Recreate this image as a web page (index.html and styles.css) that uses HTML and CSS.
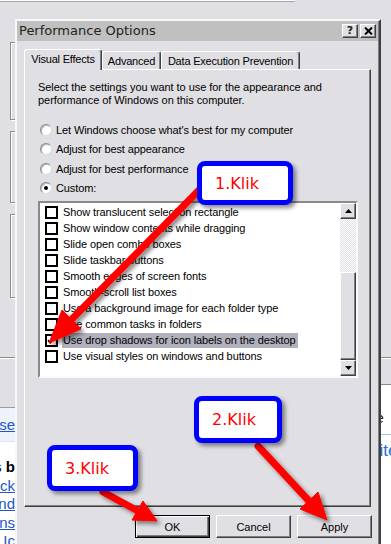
FILE: index.html
```html
<!DOCTYPE html>
<html>
<head>
<meta charset="utf-8">
<link rel="stylesheet" href="styles.css">
</head>
<body>
<div class="desk">
  <div class="bg-topline"></div>
  <div class="gbox g1"></div>
  <div class="gbox g2"></div>
  <div class="gbox g3"></div>
  <div class="bg-hline bg-hline-left"></div>
  <div class="web-left">
    <div class="wl-link-box"><a class="wl-link">Use</a></div>
    <div class="wl-line bold">Visual effects b</div>
    <div class="wl-line"><a class="wl-link">Click</a></div>
    <div class="wl-line"><a class="wl-link">and</a></div>
    <div class="wl-line"><a class="wl-link">Options</a></div>
    <div class="wl-line"><a class="wl-link">for Ic</a></div>
  </div>
  <div class="bg-hline bg-hline-right1"></div>
  <div class="bg-hline bg-hline-right2"></div>
  <div class="web-right">
    <div class="wr-line">the</div>
    <div class="wr-rule"></div>
    <div class="wr-line blue">site</div>
  </div>

  <div class="dialog">
    <div class="titlebar">
      <span class="title">Performance Options</span>
      <div class="capbtns">
        <div class="capbtn help">?</div>
        <div class="capbtn close">
          <svg width="9" height="8" viewBox="0 0 9 8"><path d="M1 0.5 L8 7.5 M8 0.5 L1 7.5" stroke="#000" stroke-width="2"/></svg>
        </div>
      </div>
    </div>
    <div class="client">
      <div class="tabs">
        <div class="tab sel tab-ve">Visual Effects</div>
        <div class="tab tab-adv">Advanced</div>
        <div class="tab tab-dep">Data Execution Prevention</div>
      </div>
      <div class="panel">
        <p class="intro">Select the settings you want to use for the appearance and<br>performance of Windows on this computer.</p>
        <div class="radios">
          <div class="radio-row"><span class="radio"></span><span>Let Windows choose what's best for my computer</span></div>
          <div class="radio-row"><span class="radio"></span><span>Adjust for best appearance</span></div>
          <div class="radio-row"><span class="radio"></span><span>Adjust for best performance</span></div>
          <div class="radio-row"><span class="radio on"></span><span>Custom:</span></div>
        </div>
        <div class="listbox">
          <ul class="items">
            <li class="item"><span class="cb"></span><span class="lbl">Show translucent selection rectangle</span></li>
            <li class="item"><span class="cb"></span><span class="lbl">Show window contents while dragging</span></li>
            <li class="item"><span class="cb"></span><span class="lbl">Slide open combo boxes</span></li>
            <li class="item"><span class="cb"></span><span class="lbl">Slide taskbar buttons</span></li>
            <li class="item"><span class="cb"></span><span class="lbl">Smooth edges of screen fonts</span></li>
            <li class="item"><span class="cb"></span><span class="lbl">Smooth-scroll list boxes</span></li>
            <li class="item"><span class="cb"></span><span class="lbl">Use a background image for each folder type</span></li>
            <li class="item"><span class="cb"></span><span class="lbl">Use common tasks in folders</span></li>
            <li class="item"><span class="cb"><svg width="9" height="9" viewBox="0 0 9 9"><path d="M1 4.2 L3.4 6.8 L8 1.2" stroke="#000" stroke-width="1.7" fill="none"/></svg></span><span class="lbl selected">Use drop shadows for icon labels on the desktop</span></li>
            <li class="item"><span class="cb"></span><span class="lbl">Use visual styles on windows and buttons</span></li>
          </ul>
          <div class="sb">
            <div class="sb-btn"><svg width="7" height="4" viewBox="0 0 7 4"><path d="M3.5 0 L7 4 L0 4Z"/></svg></div>
            <div class="sb-track"></div>
            <div class="sb-thumb"></div>
            <div class="sb-btn"><svg width="7" height="4" viewBox="0 0 7 4"><path d="M0 0 L7 0 L3.5 4Z"/></svg></div>
          </div>
        </div>
      </div>
      <div class="actions">
        <div class="btn default">OK</div>
        <div class="btn">Cancel</div>
        <div class="btn">Apply</div>
      </div>
    </div>
  </div>

  <svg class="arrows" width="391" height="544" viewBox="0 0 391 544">
    <defs>
      <filter id="sh" x="-20%" y="-20%" width="140%" height="140%">
        <feDropShadow dx="3" dy="3" stdDeviation="2" flood-color="#000" flood-opacity="0.45"/>
      </filter>
    </defs>
    <g filter="url(#sh)" fill="#ff0000" stroke="#ff0000">
      <line x1="203" y1="186" x2="71" y2="320" stroke-width="7" stroke-linecap="round"/>
      <polygon points="49,343 81,329 62,310" stroke-width="1" stroke-linejoin="round"/>
      <line x1="258" y1="446" x2="309" y2="501" stroke-width="7" stroke-linecap="round"/>
      <polygon points="327,520 318,492 300,509" stroke-width="1" stroke-linejoin="round"/>
      <line x1="103" y1="492" x2="138" y2="511" stroke-width="7" stroke-linecap="round"/>
      <polygon points="157,521 143,501 132,520" stroke-width="1" stroke-linejoin="round"/>
    </g>
  </svg>

  <div class="callout c1">1.Klik</div>
  <div class="callout c2">2.Klik</div>
  <div class="callout c3">3.Klik</div>
</div>
</body>
</html>
```
FILE: styles.css
```css
html, body {
  margin: 0;
  padding: 0;
}
body {
  width: 391px;
  height: 544px;
  overflow: hidden;
  background: #e0dfe3;
  font-family: "Liberation Sans", Arial, sans-serif;
  font-size: 11px;
  color: #000;
}
.desk {
  position: relative;
  width: 391px;
  height: 544px;
  overflow: hidden;
  background: #e0dfe3;
}

/* background windows */
.bg-topline {
  position: absolute;
  left: 0;
  top: 0;
  width: 295px;
  height: 1px;
  background: #fbfbfb;
  border-bottom: 1px solid #a8a8a8;
}
.gbox {
  position: absolute;
  left: 10px;
  width: 12px;
  border: 1px solid #8c8c8c;
  box-shadow: inset 1px 1px 0 #fff, 1px 1px 0 #fff;
}
.g1 { top: 42px; height: 76px; }
.g2 { top: 131px; height: 70px; }
.g3 { top: 214px; height: 82px; }
.bg-hline {
  position: absolute;
  height: 1px;
  background: #8c8c8c;
  box-shadow: 0 1px 0 #fff;
}
.bg-hline-left { left: 0; top: 357px; width: 15px; }
.bg-hline-right1 { left: 380px; top: 357px; width: 11px; }
.bg-hline-right2 { left: 380px; top: 384px; width: 11px; }
.web-left {
  position: absolute;
  left: 0;
  top: 407px;
  width: 15px;
  height: 137px;
  background: #fff;
  border-top: 1px solid #9a9a9a;
  overflow: hidden;
  font-family: "Liberation Sans", Arial, sans-serif;
  font-size: 15px;
}
.wl-link-box {
  height: 33px;
  background: #edf2fb;
  display: flex;
  align-items: center;
  justify-content: flex-end;
  white-space: nowrap;
  border-bottom: 1px solid #dbe4f3;
}
.wl-link {
  color: #2256c8;
  text-decoration: underline;
}
.wl-line {
  height: 18.5px;
  line-height: 18.5px;
  display: flex;
  justify-content: flex-end;
  white-space: nowrap;
}
.wl-line.bold {
  margin-top: 16px;
  font-weight: bold;
}
.web-right {
  position: absolute;
  left: 381px;
  top: 386px;
  width: 10px;
  height: 158px;
  background: #fff;
  overflow: hidden;
  font-family: "Liberation Sans", Arial, sans-serif;
  font-size: 15px;
}
.wr-line {
  padding-top: 24px;
  line-height: 16px;
  white-space: nowrap;
  margin-left: -18px;
  color: #222;
}
.wr-line.blue {
  color: #2a6fd0;
  padding-top: 8px;
  font-size: 17px;
  margin-left: -10px;
}
.wr-rule {
  margin-top: 8px;
  height: 1px;
  background: #9cc8e8;
}

/* dialog */
.dialog {
  position: absolute;
  left: 15px;
  top: 19px;
  width: 366px;
  height: 540px;
  box-sizing: border-box;
  background: #e0dfe3;
  border: 2px solid;
  border-color: #f8f8f8 #404040 #404040 #f8f8f8;
  box-shadow: inset -1px -1px 0 #808080;
}
.titlebar {
  height: 20px;
  background: #c0c0c0;
  display: flex;
  align-items: center;
  justify-content: space-between;
  padding: 0 2px 0 2px;
  margin-right: 1px;
  font-family: "DejaVu Sans", Verdana, sans-serif;
  font-size: 13px;
  color: #222;
}
.title {
  line-height: 20px;
}
.capbtns {
  display: flex;
  gap: 2px;
}
.capbtn {
  width: 16px;
  height: 14px;
  box-sizing: border-box;
  background: #e0dfe3;
  border: 1px solid;
  border-color: #fff #404040 #404040 #fff;
  box-shadow: inset -1px -1px 0 #808080;
  display: flex;
  align-items: center;
  justify-content: center;
}
.capbtn.help {
  font-family: "DejaVu Sans", Verdana, sans-serif;
  font-weight: bold;
  font-size: 11px;
  line-height: 12px;
}
.client {
  padding: 8px 8px 0 7px;
}
.tabs {
  display: flex;
  align-items: flex-end;
  height: 20px;
}
.tab {
  height: 18px;
  box-sizing: border-box;
  background: #e0dfe3;
  border: 1px solid;
  border-bottom: none;
  border-color: #fff #404040 transparent #fff;
  box-shadow: inset -1px 0 0 #808080;
  border-radius: 3px 3px 0 0;
  display: flex;
  align-items: center;
  justify-content: center;
  white-space: nowrap;
  letter-spacing: -0.2px;
}
.tab.sel {
  height: 21px;
  margin-bottom: -1px;
  position: relative;
  z-index: 1;
  padding-bottom: 3px;
}
.tab-ve { width: 78px; }
.tab-adv { width: 59px; }
.tab-dep { width: 139px; }
.panel {
  height: 438px;
  box-sizing: border-box;
  border: 1px solid;
  border-color: #fff #404040 #404040 #fff;
  box-shadow: inset -1px -1px 0 #808080;
  padding: 11px 13px 0 13px;
}
.intro {
  margin: 0;
  line-height: 13px;
  letter-spacing: -0.05px;
  white-space: nowrap;
}
.radios {
  margin-top: 13px;
}
.radio-row {
  height: 19.5px;
  display: flex;
  align-items: center;
  gap: 4px;
  padding-left: 2px;
  letter-spacing: -0.1px;
  white-space: nowrap;
}
.radio {
  position: relative;
  flex: none;
  width: 12px;
  height: 12px;
  box-sizing: border-box;
  border-radius: 50%;
  background: #fff;
  border: 1px solid;
  border-color: #8a8a8a #dcdcdc #dcdcdc #8a8a8a;
  box-shadow: inset 1px 1px 0 #b8b8b8;
}
.radio.on::after {
  content: "";
  position: absolute;
  left: 3px;
  top: 3px;
  width: 4px;
  height: 4px;
  border-radius: 50%;
  background: #000;
}
.listbox {
  margin-top: 3px;
  width: 320px;
  height: 177px;
  box-sizing: border-box;
  border: 2px solid;
  border-color: #8a8a8a #fafafa #fafafa #8a8a8a;
  background: #fff;
  display: flex;
}
.items {
  flex: 1;
  list-style: none;
  margin: 0;
  padding: 1px 0 0 5px;
}
.item {
  height: 16px;
  display: flex;
  align-items: center;
  gap: 5px;
  white-space: nowrap;
  letter-spacing: -0.1px;
}
.cb {
  flex: none;
  width: 13px;
  height: 13px;
  box-sizing: border-box;
  border: 2px solid #000;
  background: #fff;
  display: flex;
  align-items: center;
  justify-content: center;
}
.lbl {
  line-height: 15px;
}
.lbl.selected {
  background: #b1b1bd;
  padding: 0 2px 0 1px;
  margin-left: -1px;
}
.sb {
  width: 16px;
  flex: none;
  display: flex;
  flex-direction: column;
}
.sb-btn {
  height: 16px;
  flex: none;
  box-sizing: border-box;
  background: #e0dfe3;
  border: 1px solid;
  border-color: #fff #404040 #404040 #fff;
  box-shadow: inset -1px -1px 0 #808080;
  display: flex;
  align-items: center;
  justify-content: center;
}
.sb-track {
  height: 53px;
  flex: none;
  background: repeating-conic-gradient(#fff 0 25%, #e0dfe3 0 50%) 0 0 / 2px 2px;
}
.sb-thumb {
  flex: 1;
  box-sizing: border-box;
  background: #e0dfe3;
  border: 1px solid;
  border-color: #fff #404040 #404040 #fff;
  box-shadow: inset -1px -1px 0 #808080;
}
.actions {
  display: flex;
  justify-content: flex-end;
  gap: 6px;
  margin-top: 8px;
  margin-right: -1px;
}
.btn {
  width: 75px;
  height: 23px;
  box-sizing: border-box;
  background: #e0dfe3;
  border: 1px solid;
  border-color: #fff #404040 #404040 #fff;
  box-shadow: inset -1px -1px 0 #808080;
  display: flex;
  align-items: center;
  justify-content: center;
}
.btn.default {
  border: 1px solid #000;
  box-shadow: inset 1px 1px 0 #fff, inset -1px -1px 0 #404040, inset -2px -2px 0 #808080;
}

/* annotations */
.arrows {
  position: absolute;
  left: 0;
  top: 0;
}
.callout {
  position: absolute;
  box-sizing: border-box;
  border: 5px solid #0000ff;
  border-radius: 8px;
  background: #fff;
  color: #ff0000;
  font-family: "DejaVu Sans", Verdana, sans-serif;
  font-size: 16px;
  display: flex;
  align-items: center;
  padding-left: 13px;
  box-shadow: 3px 3px 4px rgba(0, 0, 0, 0.45);
}
.c1 { left: 197px; top: 161px; width: 96px; height: 44px; }
.c2 { left: 194px; top: 396px; width: 88px; height: 47px; }
.c3 { left: 47px; top: 445px; width: 91px; height: 46px; }
```
